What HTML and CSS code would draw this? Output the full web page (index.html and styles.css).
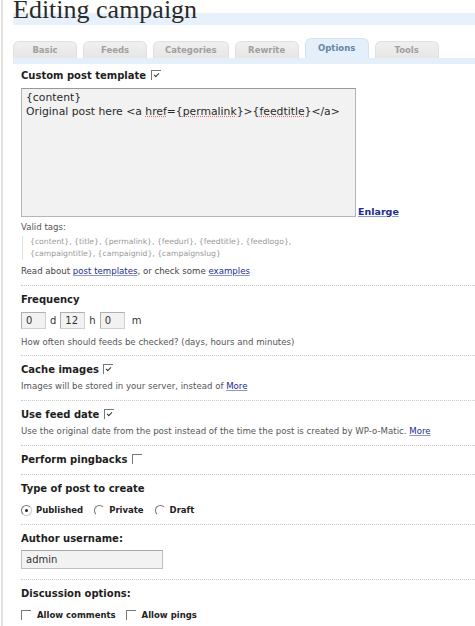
FILE: index.html
```html
<!DOCTYPE html>
<html lang="en">
<head>
    <meta charset="UTF-8">
    <meta name="viewport" content="width=device-width, initial-scale=1.0">
    <title>Editing campaign</title>
    <link rel="stylesheet" href="styles.css">
</head>
<body>
<div class="wrap">
    <h1>Editing campaign</h1>

    <ul class="tabs">
        <li>Basic</li>
        <li>Feeds</li>
        <li>Categories</li>
        <li>Rewrite</li>
        <li class="current">Options</li>
        <li>Tools</li>
    </ul>

    <form class="options">
        <div class="section first">
            <label class="title">Custom post template <span class="check on"></span></label>
            <div class="template-row">
                <div class="textarea">{content}<br>Original post here &lt;a <span class="typo">href</span>={<span class="typo">permalink</span>}&gt;{<span class="typo">feedtitle</span>}&lt;/a&gt;</div>
                <a href="#" class="enlarge">Enlarge</a>
            </div>
            <p class="note">Valid tags:</p>
            <p class="tags">{content}, {title}, {permalink}, {feedurl}, {feedtitle}, {feedlogo},<br>{campaigntitle}, {campaignid}, {campaignslug}</p>
            <p class="note read">Read about <a href="#">post templates</a>, or check some <a href="#">examples</a></p>
        </div>

        <div class="section freq-section">
            <label class="title">Frequency</label>
            <div class="freq">
                <span class="box">0</span> <span>d</span>
                <span class="box">12</span> <span>h</span>
                <span class="box">0</span> <span class="unit">m</span>
            </div>
            <p class="help">How often should feeds be checked? (days, hours and minutes)</p>
        </div>

        <div class="section">
            <label class="title">Cache images <span class="check on"></span></label>
            <p class="help">Images will be stored in your server, instead of <a href="#">More</a></p>
        </div>

        <div class="section">
            <label class="title">Use feed date <span class="check on"></span></label>
            <p class="help">Use the original date from the post instead of the time the post is created by WP-o-Matic. <a href="#">More</a></p>
        </div>

        <div class="section">
            <label class="title">Perform pingbacks <span class="check"></span></label>
        </div>

        <div class="section">
            <label class="title">Type of post to create</label>
            <div class="choices">
                <span class="radio on"></span> Published
                <span class="radio"></span> Private
                <span class="radio"></span> Draft
            </div>
        </div>

        <div class="section">
            <label class="title">Author username:</label>
            <div class="field">admin</div>
        </div>

        <div class="section last">
            <label class="title">Discussion options:</label>
            <div class="choices">
                <span class="check"></span> Allow comments
                <span class="check"></span> Allow pings
            </div>
        </div>
    </form>
</div>
</body>
</html>
```

FILE: styles.css
```css
body {
    margin: 0;
    background-color: #ffffff;
    font-family: "DejaVu Sans", Verdana, sans-serif;
    color: #222;
}
.wrap {
    border-left: 2px solid #e2e2e2;
    margin-left: 1px;
    padding-left: 10px;
    min-height: 626px;
}
h1 {
    margin: 0;
    font-family: "Liberation Serif", "Times New Roman", serif;
    font-weight: normal;
    font-size: 26px;
    line-height: 20px;
    height: 26px;
    color: #2a2a2a;
    background: linear-gradient(to bottom, transparent 13px, #e6f1fb 13px, #e6f1fb 25px, transparent 25px);
}
.tabs {
    list-style: none;
    margin: 12px 0 0;
    padding: 0 0 6px;
    display: flex;
    align-items: flex-end;
    gap: 6px;
    background: linear-gradient(to bottom, transparent 20px, #e4effa 20px);
}
.tabs li {
    min-width: 64px;
    box-sizing: border-box;
    padding: 0 11px;
    height: 17px;
    line-height: 16px;
    text-align: center;
    font-size: 8.5px;
    font-weight: bold;
    color: #a0a0a0;
    background: linear-gradient(#f0f0f0, #e6e6e6);
    border: 1px solid #e0e0e0;
    border-bottom: none;
    border-radius: 6px 6px 0 0;
}
.tabs li.current {
    height: 20px;
    line-height: 19px;
    background: #e4effa;
    border-color: #d3e3f3;
    color: #6585ad;
}
.options {
    padding-left: 8px;
}
.section {
    border-bottom: 1px dotted #c8c8c8;
    padding: 7px 0 7px;
}
.section.first {
    padding-top: 5px;
}
.section.last {
    border-bottom: none;
}
.title {
    display: block;
    font-size: 10px;
    font-weight: bold;
    line-height: 14px;
    color: #1e1e1e;
}
.check {
    display: inline-block;
    width: 9px;
    height: 9px;
    border-top: 1px solid #777;
    border-left: 1px solid #777;
    vertical-align: -1px;
    margin-left: 1px;
    position: relative;
}
.check.on::after {
    content: "";
    position: absolute;
    left: 2px;
    top: 2px;
    width: 4px;
    height: 2px;
    border-left: 1px solid #333;
    border-bottom: 1px solid #333;
    transform: rotate(-45deg);
}
.template-row {
    display: flex;
    align-items: flex-end;
    margin-top: 5px;
}
.textarea {
    width: 335px;
    height: 129px;
    box-sizing: border-box;
    padding: 2px 4px;
    background: #f2f2f2;
    border: 1px solid #b5b5b5;
    border-top-color: #999;
    font-size: 10.8px;
    line-height: 14px;
    color: #2a2a2a;
}
.typo {
    text-decoration: underline dotted #e07070;
}
.enlarge {
    margin-left: 2px;
    font-size: 9.5px;
    font-weight: bold;
}
a {
    color: #242b8a;
    text-decoration: underline;
    text-decoration-color: #8a9ad0;
}
p {
    margin: 0;
}
.note {
    font-size: 8.6px;
    line-height: 13px;
    color: #555;
    margin-top: 4px;
}
.tags {
    margin: 2px 0 0 1px;
    padding-left: 7px;
    border-left: 1px solid #e2e2e2;
    font-size: 7.7px;
    line-height: 12px;
    color: #999;
}
.note.read {
    margin-top: 5px;
    color: #444;
}
.freq-section {
    padding-bottom: 6px;
}
.freq {
    margin-top: 5px;
    font-size: 10px;
    line-height: 17px;
    display: flex;
    align-items: center;
    gap: 4px;
    color: #333;
}
.freq .unit {
    margin-left: 3px;
}
.box {
    width: 25px;
    height: 17px;
    box-sizing: border-box;
    padding-left: 4px;
    background: #f2f2f2;
    border: 1px solid #d0d0d0;
    border-top-color: #b0b0b0;
    border-left-color: #b0b0b0;
    line-height: 15px;
    font-size: 10px;
}
.help {
    margin-top: 2px;
    font-size: 8.6px;
    line-height: 14px;
    color: #555;
}
.freq + .help {
    margin-top: 6px;
}
.choices {
    margin-top: 7px;
    font-size: 8.5px;
    font-weight: bold;
    line-height: 14px;
    display: flex;
    align-items: center;
    gap: 4px;
}
.radio {
    display: inline-block;
    width: 9px;
    height: 9px;
    border-radius: 50%;
    border-top: 1px solid #777;
    border-left: 1px solid #777;
    border-right: 1px solid transparent;
    border-bottom: 1px solid transparent;
    margin-left: 7px;
    position: relative;
}
.radio:first-child {
    margin-left: 0;
}
.radio.on {
    border-right-color: #ccc;
    border-bottom-color: #ccc;
}
.radio.on::after {
    content: "";
    position: absolute;
    left: 3px;
    top: 3px;
    width: 3px;
    height: 3px;
    border-radius: 50%;
    background: #222;
}
.choices .check {
    margin: 0 2px 0 6px;
}
.choices .check:first-child {
    margin-left: 0;
}
.field {
    margin: 4px 0 3px;
    width: 142px;
    height: 19px;
    box-sizing: border-box;
    padding-left: 4px;
    background: #f2f2f2;
    border: 1px solid #c0c0c0;
    border-top-color: #a8a8a8;
    font-size: 10px;
    line-height: 17px;
    color: #333;
}
```
